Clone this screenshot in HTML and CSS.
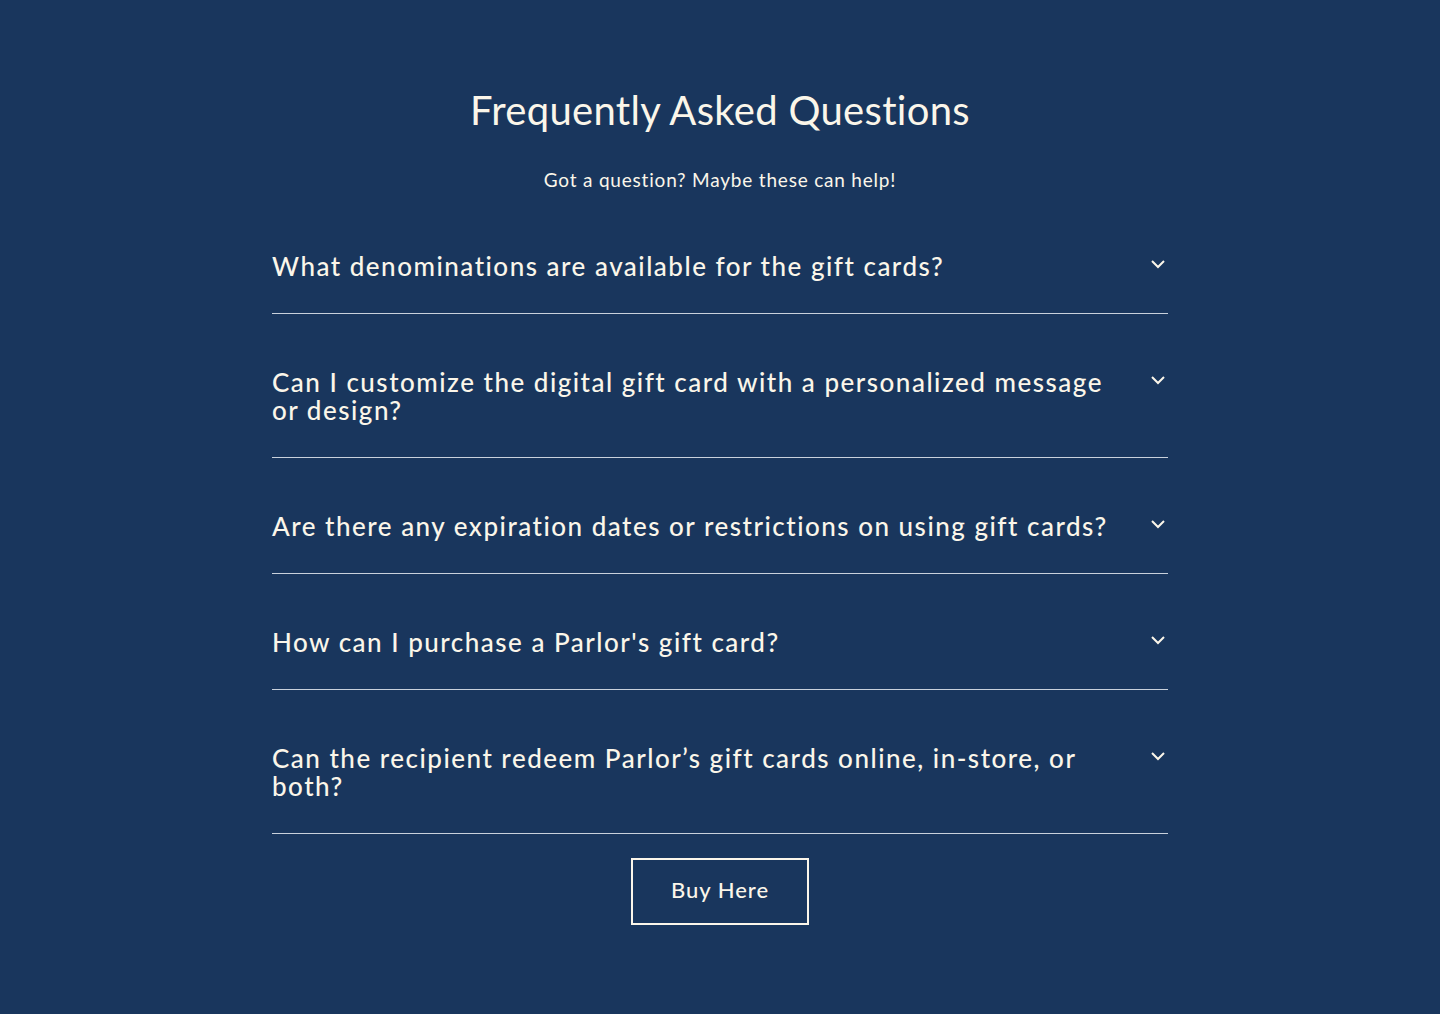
FILE: index.html
```html
<!DOCTYPE html>
<html lang="en">
<head>
<meta charset="utf-8">
<title>FAQ</title>
<link rel="stylesheet" href="styles.css">
</head>
<body>
<section class="faq">
  <h2 class="faq-title">Frequently Asked Questions</h2>
  <p class="faq-sub">Got a question? Maybe these can help!</p>
  <div class="faq-list">
    <div class="faq-item">
      <span class="faq-q">What denominations are available for the gift cards?</span>
      <svg class="chev" width="16" height="10" viewBox="0 0 16 10"><polyline points="2,2 8,8 14,2" fill="none" stroke="#fbf6ea" stroke-width="2"/></svg>
    </div>
    <div class="faq-item">
      <span class="faq-q">Can I customize the digital gift card with a personalized message or design?</span>
      <svg class="chev" width="16" height="10" viewBox="0 0 16 10"><polyline points="2,2 8,8 14,2" fill="none" stroke="#fbf6ea" stroke-width="2"/></svg>
    </div>
    <div class="faq-item">
      <span class="faq-q">Are there any expiration dates or restrictions on using gift cards?</span>
      <svg class="chev" width="16" height="10" viewBox="0 0 16 10"><polyline points="2,2 8,8 14,2" fill="none" stroke="#fbf6ea" stroke-width="2"/></svg>
    </div>
    <div class="faq-item">
      <span class="faq-q">How can I purchase a Parlor's gift card?</span>
      <svg class="chev" width="16" height="10" viewBox="0 0 16 10"><polyline points="2,2 8,8 14,2" fill="none" stroke="#fbf6ea" stroke-width="2"/></svg>
    </div>
    <div class="faq-item">
      <span class="faq-q">Can the recipient redeem Parlor’s gift cards online, in-store, or both?</span>
      <svg class="chev" width="16" height="10" viewBox="0 0 16 10"><polyline points="2,2 8,8 14,2" fill="none" stroke="#fbf6ea" stroke-width="2"/></svg>
    </div>
  </div>
  <div class="faq-cta">
    <a class="btn" href="#">Buy Here</a>
  </div>
</section>
</body>
</html>
```

FILE: styles.css
```css
html, body {
  margin: 0;
  padding: 0;
  background: #19365d;
  height: 100%;
}
body {
  font-family: Lato, "Open Sans", sans-serif;
  color: #fbf6ea;
}
.faq {
  width: 896px;
  margin: 0 auto;
  padding-top: 86px;
}
.faq-title {
  margin: 0;
  text-align: center;
  font-weight: 400;
  font-size: 40px;
  line-height: 48px;
  letter-spacing: 0.3px;
}
.faq-sub {
  margin: 34px 0 0;
  text-align: center;
  font-size: 19px;
  line-height: 24px;
  font-weight: 400;
  letter-spacing: 0.8px;
}
.faq-list {
  margin-top: 6px;
}
.faq-item {
  display: flex;
  align-items: flex-start;
  justify-content: space-between;
  padding: 54px 0 33px;
  border-bottom: 1px solid #c9d1dc;
}
.faq-q {
  max-width: 850px;
  font-size: 26px;
  line-height: 28px;
  font-weight: 500;
  letter-spacing: 1.5px;
}
.chev {
  margin-top: 7px;
  margin-right: 2px;
  flex: none;
}
.faq-cta {
  display: flex;
  justify-content: center;
  margin-top: 24px;
}
.btn {
  display: block;
  width: 174px;
  height: 63px;
  border: 2px solid #fbf6ea;
  color: #fbf6ea;
  text-decoration: none;
  font-size: 22px;
  line-height: 60px;
  text-align: center;
  font-weight: 500;
  letter-spacing: 1px;
}
```
